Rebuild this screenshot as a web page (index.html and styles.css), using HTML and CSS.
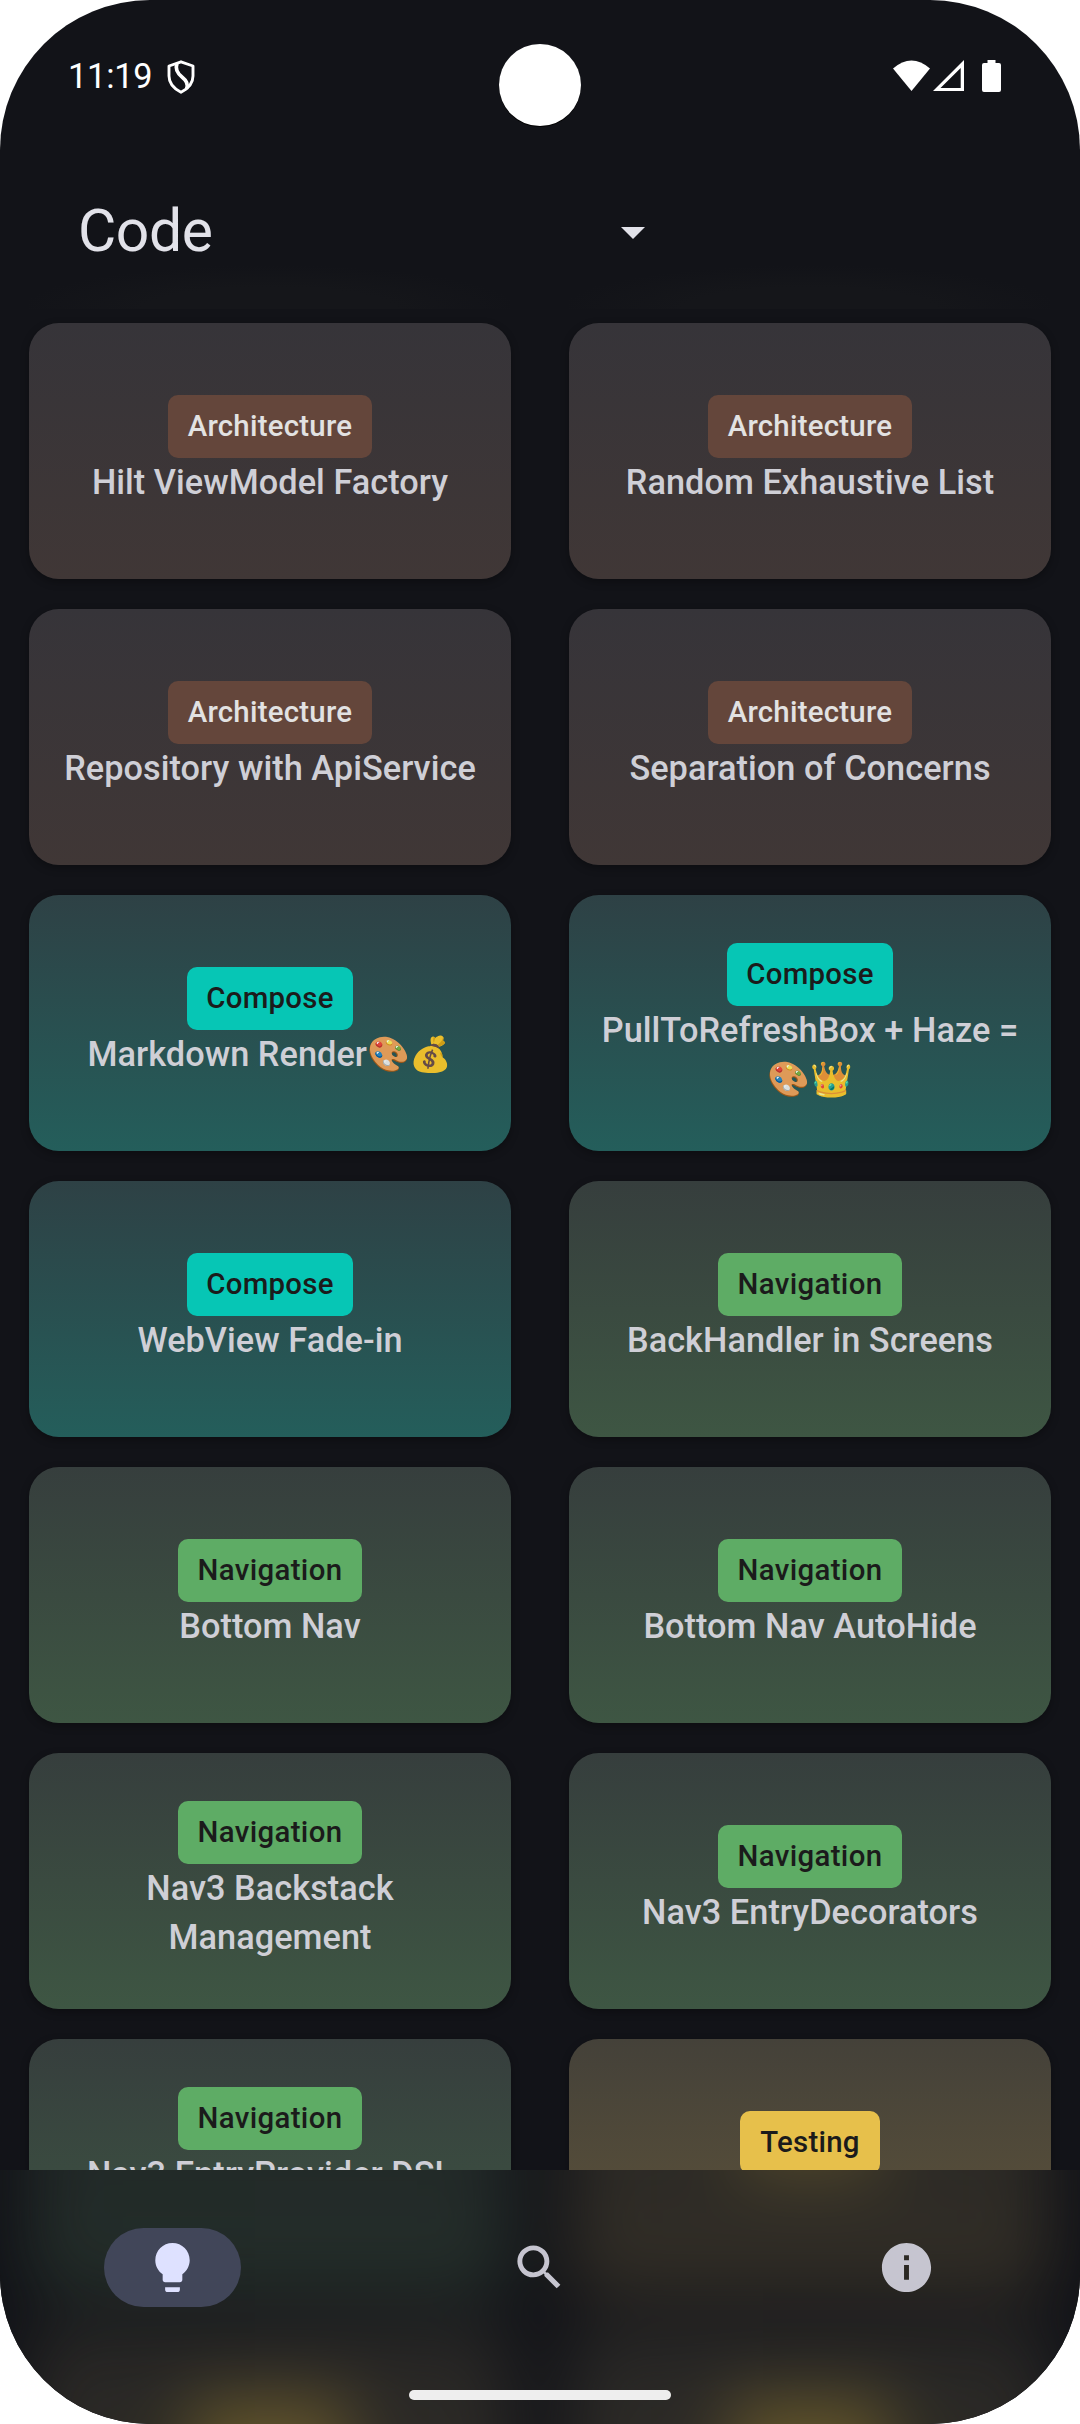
FILE: index.html
```html
<!DOCTYPE html>
<html lang="en">
<head>
<meta charset="utf-8">
<title>Code</title>
<link rel="stylesheet" href="styles.css">
</head>
<body>
<div class="screen">
  <div class="status">
    <span class="clock">11:19</span>
    <svg class="shield" viewBox="0 0 28 34" fill="none" stroke="#fff" stroke-width="2.9" stroke-linejoin="round"><path d="M14 1.800 26 6v10c0 7-4.500 12.500-12 16.200C6.500 28.500 2 23 2 16V6Z"/><path d="M10 3.500C7.500 10 11 14 15.500 17.500 20 21 21.500 24 19.500 28.500" stroke-width="3.600"/></svg>
    <svg class="signals" viewBox="0 0 108 32" fill="#fff"><path d="M0 8.500Q18.500-7.500 37 8.500L18.500 31Z"/><path fill-rule="evenodd" d="M71 0V31H40ZM67.700 8 47.500 28H67.700Z"/><path d="M94.500 0h8v3h3.500a2 2 0 0 1 2 2v25a2 2 0 0 1-2 2H91a2 2 0 0 1-2-2V5a2 2 0 0 1 2-2h3.500Z"/></svg>
  </div>
  <div class="camera"></div>
  <header class="header">
    <h1 class="heading">Code</h1>
    <svg class="caret" viewBox="0 0 24 12" fill="#e2e2e9"><path d="M0 0h24L12 12Z"/></svg>
  </header>
  <div class="header-glow"><span></span><span></span></div>
  <main class="list">
    <div class="grid">
      <article class="card architecture"><span class="tag">Architecture</span><p class="name">Hilt ViewModel Factory</p></article>
      <article class="card architecture"><span class="tag">Architecture</span><p class="name">Random Exhaustive List</p></article>
      <article class="card architecture"><span class="tag">Architecture</span><p class="name">Repository with ApiService</p></article>
      <article class="card architecture"><span class="tag">Architecture</span><p class="name">Separation of Concerns</p></article>
      <article class="card compose"><span class="tag">Compose</span><p class="name">Markdown Render<span class="emoji">🎨💰</span></p></article>
      <article class="card compose"><span class="tag">Compose</span><p class="name">PullToRefreshBox + Haze = <span class="emoji">🎨👑</span></p></article>
      <article class="card compose"><span class="tag">Compose</span><p class="name">WebView Fade-in</p></article>
      <article class="card navigation"><span class="tag">Navigation</span><p class="name">BackHandler in Screens</p></article>
      <article class="card navigation"><span class="tag">Navigation</span><p class="name">Bottom Nav</p></article>
      <article class="card navigation"><span class="tag">Navigation</span><p class="name">Bottom Nav AutoHide</p></article>
      <article class="card navigation"><span class="tag">Navigation</span><p class="name">Nav3 Backstack<br>Management</p></article>
      <article class="card navigation"><span class="tag">Navigation</span><p class="name">Nav3 EntryDecorators</p></article>
      <article class="card navigation"><span class="tag">Navigation</span><p class="name">Nav3 EntryProvider DSL<br>&nbsp;</p></article>
      <article class="card testing"><span class="tag">Testing</span><p class="name">&nbsp;</p></article>
    </div>
  </main>
  <nav class="bar">
    <div class="haze">
      <div class="haze-grid">
        <div class="card flat navigation"></div>
        <div class="card flat testing"><span class="tag blank"></span><p class="name">&nbsp;</p></div>
        <div class="card flat testing"><span class="tag blank tall"></span></div>
        <div class="card flat testing"><span class="tag blank tall"></span></div>
      </div>
    </div>
    <a class="item"><span class="pill"><svg class="icon" viewBox="0 0 24 24" fill="#dee1ff"><path d="M9 21c0 .5.400 1 1 1h4c.6 0 1-.5 1-1v-1H9v1zm3-19C8.100 2 5 5.100 5 9c0 2.400 1.200 4.500 3 5.700V17c0 .5.400 1 1 1h6c.6 0 1-.5 1-1v-2.300c1.800-1.300 3-3.400 3-5.700 0-3.900-3.100-7-7-7z"/></svg></span></a>
    <a class="item"><svg class="icon" viewBox="0 0 24 24" fill="#c6c5d0"><path d="M15.500 14h-.79l-.28-.27A6.471 6.471 0 0 0 16 9.500 6.500 6.500 0 1 0 9.500 16c1.610 0 3.090-.59 4.230-1.570l.27.28v.79l5 4.990L20.490 19l-4.990-5zm-6 0C7.010 14 5 11.990 5 9.500S7.010 5 9.500 5 14 7.010 14 9.500 11.990 14 9.500 14z"/></svg></a>
    <a class="item"><svg class="icon" viewBox="0 0 24 24" fill="#c6c5d0"><path d="M12 2C6.480 2 2 6.480 2 12s4.480 10 10 10 10-4.480 10-10S17.520 2 12 2zm1 15h-2v-6h2v6zm0-8h-2V7h2v2z"/></svg></a>
    <span class="handle"></span>
  </nav>
</div>
</body>
</html>
```

FILE: styles.css
```css
body { margin: 0; background: #fff; font-family: Roboto, "Noto Sans", sans-serif; }
.screen {
  position: relative;
  width: 1080px;
  height: 2424px;
  overflow: hidden;
  border-radius: 150px;
  background: #121318;
  display: flex;
  flex-direction: column;
}
.status {
  box-sizing: border-box;
  height: 152px;
  padding: 56px 79px 0 68px;
  display: flex;
  align-items: flex-start;
  flex: none;
}
.clock { font-size: 34.3px; line-height: 41px; color: #fff; width: 99px; letter-spacing: -.2px; }
.shield { width: 28px; height: 34px; margin-top: 4px; }
.signals { width: 108px; height: 32px; margin: 4px 0 0 auto; }
.camera {
  position: absolute;
  left: 499px;
  top: 44px;
  width: 82px;
  height: 82px;
  border-radius: 50%;
  background: #fff;
  box-shadow: 0 1px 0 #000;
}
.header {
  box-sizing: border-box;
  height: 113px;
  padding: 0 435px 0 78px;
  display: flex;
  align-items: flex-start;
  justify-content: space-between;
  flex: none;
}
.heading { margin: 44px 0 0; font-size: 58.8px; line-height: 70px; font-weight: 400; letter-spacing: -.4px; color: #e2e2e9; }
.caret { width: 24px; height: 12px; margin-top: 75px; }
.header-glow { height: 44px; flex: none; display: flex; gap: 58px; padding: 0 29px; }
.header-glow span { flex: 1; background: radial-gradient(ellipse 52% 100% at 50% 100%, #15161a 50%, #121318); }
.list { height: 1861px; flex: none; }
.grid {
  padding: 14px 29px 0;
  display: grid;
  grid-template-columns: 482px 482px;
  grid-auto-rows: 256px;
  gap: 30px 58px;
}
.card {
  box-sizing: border-box;
  padding: 0 20px;
  border-radius: 30px;
  display: flex;
  flex-direction: column;
  align-items: center;
  justify-content: center;
  box-shadow: 0 3px 8px rgba(0, 0, 0, .3);
}
.tag {
  box-sizing: border-box;
  height: 63px;
  padding: 0 20px;
  border-radius: 10px;
  font-size: 29.4px;
  line-height: 62px;
  letter-spacing: .25px;
  font-weight: 500;
  color: #1b1b1b;
}
.name {
  margin: 0;
  font-size: 34.3px;
  line-height: 49px;
  letter-spacing: .04px;
  font-weight: 500;
  text-align: center;
  color: #cfcfd6;
}
.emoji { font-family: "Noto Color Emoji", Roboto, sans-serif; opacity: .9; }
.architecture { background: linear-gradient(#363439, #403736); }
.architecture .tag { background: #64463b; color: #e2e2e2; }
.compose { background: linear-gradient(#2e4145, #245e5b); }
.compose .tag { background: #06c6b5; padding: 0 19.5px; }
.navigation { background: linear-gradient(#363e3d, #3e5643); }
.navigation .tag { background: #5eac65; letter-spacing: .35px; }
.testing { background: linear-gradient(#444139, #61553a); }
.testing .tag { background: #e7c04b; }
.bar {
  position: relative;
  flex: none;
  height: 254px;
  display: flex;
  gap: 22px;
  overflow: hidden;
}
/* Blurred cards continuing under the navigation bar */
.haze { position: absolute; inset: 0; background: #121318; overflow: hidden; }
.haze-grid {
  position: absolute;
  top: -131px;
  left: 0;
  right: 0;
  padding: 0 29px;
  display: grid;
  grid-template-columns: 482px 482px;
  grid-auto-rows: 256px;
  gap: 30px 58px;
  filter: blur(34px);
  opacity: .42;
}
.flat { box-shadow: none; }
.blank { width: 142px; opacity: .65; }
.tall { width: 160px; height: 184px; margin-top: 72px; opacity: .85; }
.item { position: relative; width: 345px; height: 79px; margin-top: 58px; display: flex; align-items: center; justify-content: center; }
.pill { width: 137px; height: 79px; border-radius: 40px; background: #414659; display: flex; align-items: center; justify-content: center; }
.icon { width: 59px; height: 59px; }
.handle { position: absolute; left: 409px; top: 220px; width: 262px; height: 10px; border-radius: 5px; background: #eeeeee; }
```
